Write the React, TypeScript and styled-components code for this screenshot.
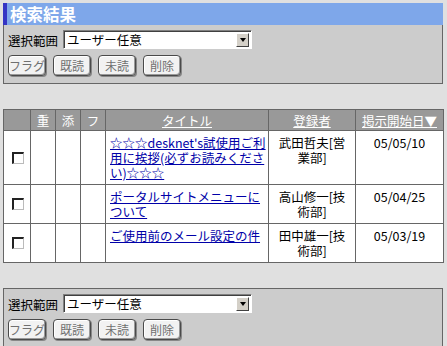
import React from "react";
import styled, { createGlobalStyle } from "styled-components";

const Global = createGlobalStyle`
  html, body { margin: 0; padding: 0; background: #e0e0e0; }
  body { font-family: "Noto Sans CJK JP", "Noto Sans", sans-serif; font-size: 12.5px; color: #000; }
`;

const Page = styled.div`
  width: 440px;
  padding: 3px 4px 3px 3px;
  display: flex;
  flex-direction: column;
`;

const TitleBar = styled.div`
  height: 22px;
  background: #7ea7ea;
  border-left: 4px solid #3434c4;
  display: flex;
  align-items: center;
  padding-left: 3px;
  color: #fff;
  font-weight: bold;
  font-size: 16.5px;
  line-height: 22px;
`;

const Panel = styled.div<{ $boxed?: boolean }>`
  background: #cccccc;
  border: 1px solid #666;
  border-top: ${(p) => (p.$boxed ? "1px solid #666" : "none")};
  padding: 5px 4px 7px 4px;
  display: flex;
  flex-direction: column;
  gap: 6px;
`;

const FieldRow = styled.div`
  display: flex;
  align-items: center;
  gap: 5px;
`;

const Label = styled.span`
  font-size: 12.5px;
  line-height: 15px;
  padding-top: 1px;
`;

const SelectBox = styled.div`
  box-sizing: border-box;
  width: 189px;
  height: 19px;
  background: #fff;
  border-top: 1px solid #808080;
  border-left: 1px solid #808080;
  border-right: 1px solid #fff;
  border-bottom: 1px solid #fff;
  box-shadow: inset 1px 1px 0 #404040;
  display: flex;
  align-items: center;
  padding: 0 2px 0 3px;
`;

const SelectText = styled.span`
  flex: 1;
  font-size: 12.5px;
  line-height: 15px;
`;

const Arrow = styled.span`
  box-sizing: border-box;
  width: 13px;
  height: 14px;
  background: #d4d0c8;
  border-top: 1px solid #fff;
  border-left: 1px solid #fff;
  border-right: 1px solid #404040;
  border-bottom: 1px solid #404040;
  display: flex;
  align-items: center;
  justify-content: center;
  &::after {
    content: "";
    border-left: 3.5px solid transparent;
    border-right: 3.5px solid transparent;
    border-top: 4px solid #000;
  }
`;

const ButtonRow = styled.div`
  display: flex;
  gap: 7px;
`;

const Btn = styled.button`
  box-sizing: border-box;
  width: 38px;
  height: 21px;
  padding: 0;
  background: #f2f2f2;
  border: 1px solid #4a4a4a;
  border-radius: 4px;
  box-shadow: inset 1px 1px 0 #fff, inset -1px -1px 0 #9a9a9a, 1px 1px 0 #888;
  color: #707070;
  font-family: "Noto Sans CJK JP", sans-serif;
  font-size: 12px;
  line-height: 14px;
  display: flex;
  align-items: center;
  justify-content: center;
`;

const Spacer = styled.div`
  height: 25px;
`;

const Table = styled.table`
  width: 440px;
  border-collapse: collapse;
  table-layout: fixed;
  background: #fff;
`;

const Th = styled.th<{ $link?: boolean }>`
  background: #999999;
  color: #fff;
  border: 1px solid #666;
  font-weight: normal;
  font-size: 12.5px;
  line-height: 15px;
  padding: 3px 0 2px;
  text-align: center;
  text-decoration: ${(p) => (p.$link ? "underline" : "none")};
  white-space: nowrap;
`;

const Td = styled.td<{ $align?: string; $valign?: string; $tight?: boolean }>`
  border: 1px solid #666;
  font-size: 12.5px;
  line-height: 15px;
  padding: 4px ${(p) => (p.$tight ? "1px" : "4px")} 4px 4px;
  vertical-align: ${(p) => p.$valign || "top"};
  text-align: ${(p) => p.$align || "left"};
`;

const Check = styled.span`
  display: block;
  box-sizing: border-box;
  width: 12px;
  height: 12px;
  margin-left: 4px;
  background: #fff;
  border-top: 2px solid #222;
  border-left: 2px solid #222;
  border-right: 1px solid #bbb;
  border-bottom: 1px solid #bbb;
`;

const TitleLink = styled.a`
  color: #0000a8;
  text-decoration: underline;
  cursor: pointer;
`;

const rows = [
  { title: "☆☆☆desknet's試使用ご利用に挨拶(必ずお読みください)☆☆☆", who: "武田哲夫[営業部]", date: "05/05/10" },
  { title: "ポータルサイトメニューについて", who: "高山修一[技術部]", date: "05/04/25" },
  { title: "ご使用前のメール設定の件", who: "田中雄一[技術部]", date: "05/03/19" },
];

const Controls: React.FC = () => (
  <>
    <FieldRow>
      <Label>選択範囲</Label>
      <SelectBox>
        <SelectText>ユーザー任意</SelectText>
        <Arrow />
      </SelectBox>
    </FieldRow>
    <ButtonRow>
      <Btn>フラグ</Btn>
      <Btn>既読</Btn>
      <Btn>未読</Btn>
      <Btn>削除</Btn>
    </ButtonRow>
  </>
);

export default function App() {
  return (
    <Page>
      <Global />
      <TitleBar>検索結果</TitleBar>
      <Panel>
        <Controls />
      </Panel>
      <Spacer />
      <Table>
        <colgroup>
          <col style={{ width: 27 }} />
          <col style={{ width: 25 }} />
          <col style={{ width: 25 }} />
          <col style={{ width: 25 }} />
          <col style={{ width: 163 }} />
          <col style={{ width: 87 }} />
          <col style={{ width: 88 }} />
        </colgroup>
        <thead>
          <tr>
            <Th></Th>
            <Th>重</Th>
            <Th>添</Th>
            <Th>フ</Th>
            <Th $link>タイトル</Th>
            <Th $link>登録者</Th>
            <Th $link>掲示開始日▼</Th>
          </tr>
        </thead>
        <tbody>
          {rows.map((r) => (
            <tr key={r.date}>
              <Td $valign="middle"><Check /></Td>
              <Td />
              <Td />
              <Td />
              <Td $tight><TitleLink>{r.title}</TitleLink></Td>
              <Td $align="center">{r.who}</Td>
              <Td $align="center">{r.date}</Td>
            </tr>
          ))}
        </tbody>
      </Table>
      <Spacer />
      <Panel $boxed>
        <Controls />
      </Panel>
    </Page>
  );
}
